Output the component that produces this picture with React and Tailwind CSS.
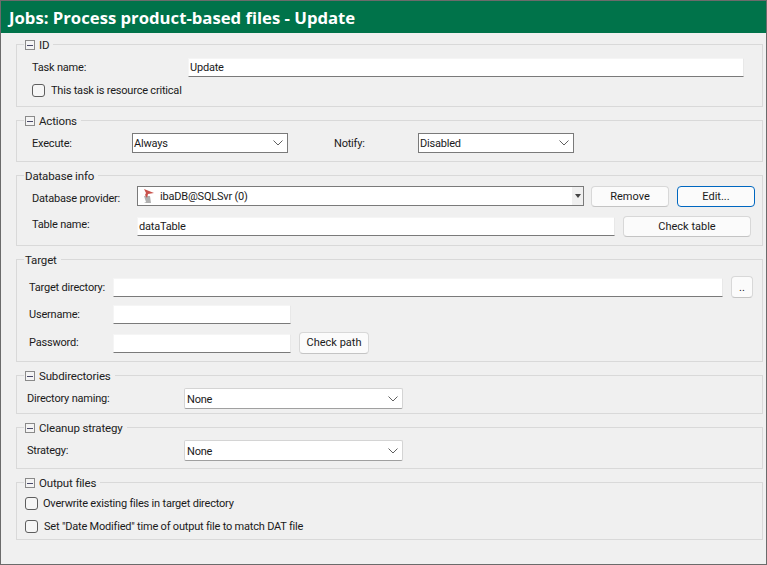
import React from "react";

function Minus() {
  return (
    <span className="flex h-[10px] w-[10px] items-center justify-center border border-[#8a8a8a] bg-[#f4f4f4]">
      <span className="h-px w-[6px] bg-[#4a4a6a]" />
    </span>
  );
}

function Group({ title, toggle = true, h, pt, first, children }) {
  return (
    <section className={`relative ${first ? "mt-[11px]" : "mt-[13px]"} border border-[#d9d9d9]`} style={{ height: h, paddingTop: pt }}>
      <div className="absolute left-[7px] top-[-8px] flex h-[16px] items-center gap-[4px] bg-[#f0f0f0] px-[1px] pr-[4px] text-[11.5px] tracking-[-0.15px] text-[#222]">
        {toggle && <Minus />}
        <span>{title}</span>
      </div>
      {children}
    </section>
  );
}

function Input({ className = "", children }) {
  return (
    <div className={`flex h-[19px] items-center border-b border-b-[#7a7a7a] border-t border-t-[#f5f5f5] border-l border-l-[#f5f5f5] border-r border-r-[#e8e8e8] bg-white pl-[1px] ${className}`}>
      {children}
    </div>
  );
}

function Chevron() {
  return (
    <svg width="10" height="6" viewBox="0 0 10 6" className="ml-auto mr-[4px] shrink-0">
      <path d="M0.5 0.5 L5 5 L9.5 0.5" fill="none" stroke="#606060" strokeWidth="1" />
    </svg>
  );
}

function Select({ className = "", soft, children }) {
  return (
    <div className={`flex items-center bg-white ${soft ? "h-[21px] rounded-[2px] border border-[#d4d4d4] border-b-[#a0a0a0] pl-[2px]" : "h-[20px] border border-[#7a7a7a] pl-[1px]"} ${className}`}>
      <span className={soft ? "pt-[2px]" : ""}>{children}</span>
      <Chevron />
    </div>
  );
}

function Button({ className = "", blue, children }) {
  return (
    <div className={`flex items-center justify-center rounded-[4px] border bg-[#fbfbfb] tracking-normal text-[#1a1a1a] ${blue ? "border-[#0067c0]" : "border-[#d8d8d8] border-b-[#c4c4c4]"} ${className}`}>
      {children}
    </div>
  );
}

function Check({ children, gap = "gap-[6px]", textClass = "" }) {
  return (
    <div className={`flex items-center ${gap}`}>
      <span className="h-[13px] w-[13px] rounded-[3px] border border-[#5e5e5e] bg-[#f6f6f6]" />
      <span className={textClass}>{children}</span>
    </div>
  );
}

export default function App() {
  return (
    <div
      className="flex h-[565px] w-[767px] flex-col overflow-hidden whitespace-nowrap border border-[#6b6b6b] bg-[#f0f0f0] text-[11px] leading-[17px] tracking-[-0.2px] text-[#1a1a1a]"
      style={{ fontFamily: 'Roboto, "Noto Sans", sans-serif' }}
    >
      <header
        className="flex h-[32px] shrink-0 items-center bg-[#00734a] pl-[8px] text-[16.7px] font-bold tracking-normal text-white"
        style={{ fontFamily: '"Open Sans", sans-serif' }}
      >
        Jobs: Process product-based files - Update
      </header>
      <main className="flex flex-col pl-[15px] pr-[3px]">
        <Group title="ID" h={63} pt={13} first>
          <div className="flex items-center pl-[15px]">
            <span className="w-[156px]">Task name:</span>
            <Input className="w-[556px]">Update</Input>
          </div>
          <div className="mt-[5px] pl-[15px]">
            <Check>This task is resource critical</Check>
          </div>
        </Group>

        <Group title="Actions" h={42} pt={12}>
          <div className="flex items-center pl-[15px]">
            <span className="w-[100px]">Execute:</span>
            <Select className="w-[156px]">Always</Select>
            <span className="ml-[46px] w-[84px]">Notify:</span>
            <Select className="w-[156px]">Disabled</Select>
          </div>
        </Group>

        <Group title="Database info" toggle={false} h={71} pt={9}>
          <div className="flex items-center pl-[15px]">
            <span className="w-[105px] pt-[5px]">Database provider:</span>
            <div className="flex h-[20px] w-[447px] items-center border border-[#7a7a7a] bg-white pl-[3px]">
              <svg width="15" height="16" viewBox="0 0 15 16" className="mr-[4px] shrink-0">
                <path d="M3 8 L5 14 L3 15 L10 15 L9 8 Z" fill="#b0b0b0" />
                <path d="M3 1 L13 5 L7 6 L6 10 L4 7 L5 5 Z" fill="#c9524c" />
              </svg>
              <span>ibaDB@SQLSvr (0)</span>
              <span className="ml-auto flex h-full w-[11px] items-center justify-center bg-[#f0f0f0]">
                <span className="h-0 w-0 border-x-[3px] border-t-[4px] border-x-transparent border-t-[#444]" />
              </span>
            </div>
            <Button className="ml-[7px] h-[21px] w-[78px]">Remove</Button>
            <Button blue className="ml-[8px] h-[21px] w-[78px]">Edit...</Button>
          </div>
          <div className="mt-[9px] flex items-center pl-[15px]">
            <span className="w-[105px] pb-[4px]">Table name:</span>
            <Input className="w-[478px]">dataTable</Input>
            <Button className="ml-[8px] h-[21px] w-[128px]">Check table</Button>
          </div>
        </Group>

        <Group title="Target" toggle={false} h={103} pt={16}>
          <div className="flex items-center pl-[12px]">
            <span className="w-[84px]">Target directory:</span>
            <Input className="w-[610px]" />
            <Button className="ml-[8px] h-[22px] w-[22px]">..</Button>
          </div>
          <div className="mt-[7px] flex items-center pl-[12px]">
            <span className="w-[84px]">Username:</span>
            <Input className="w-[178px]" />
          </div>
          <div className="mt-[8px] flex items-center pl-[12px]">
            <span className="w-[84px] pb-[2px]">Password:</span>
            <Input className="w-[178px]" />
            <Button className="ml-[8px] h-[22px] w-[70px] pb-[2px]">Check path</Button>
          </div>
        </Group>

        <Group title="Subdirectories" h={39} pt={12}>
          <div className="flex items-center pl-[10px]">
            <span className="w-[157px]">Directory naming:</span>
            <Select soft className="w-[219px]">None</Select>
          </div>
        </Group>

        <Group title="Cleanup strategy" h={42} pt={12}>
          <div className="flex items-center pl-[10px]">
            <span className="w-[157px]">Strategy:</span>
            <Select soft className="w-[219px]">None</Select>
          </div>
        </Group>

        <Group title="Output files" h={58} pt={12}>
          <div className="pl-[8px]">
            <Check gap="gap-[5px]">Overwrite existing files in target directory</Check>
          </div>
          <div className="mt-[5px] pl-[8px]">
            <Check textClass="pt-[1px]">Set "Date Modified" time of output file to match DAT file</Check>
          </div>
        </Group>
      </main>
    </div>
  );
}
